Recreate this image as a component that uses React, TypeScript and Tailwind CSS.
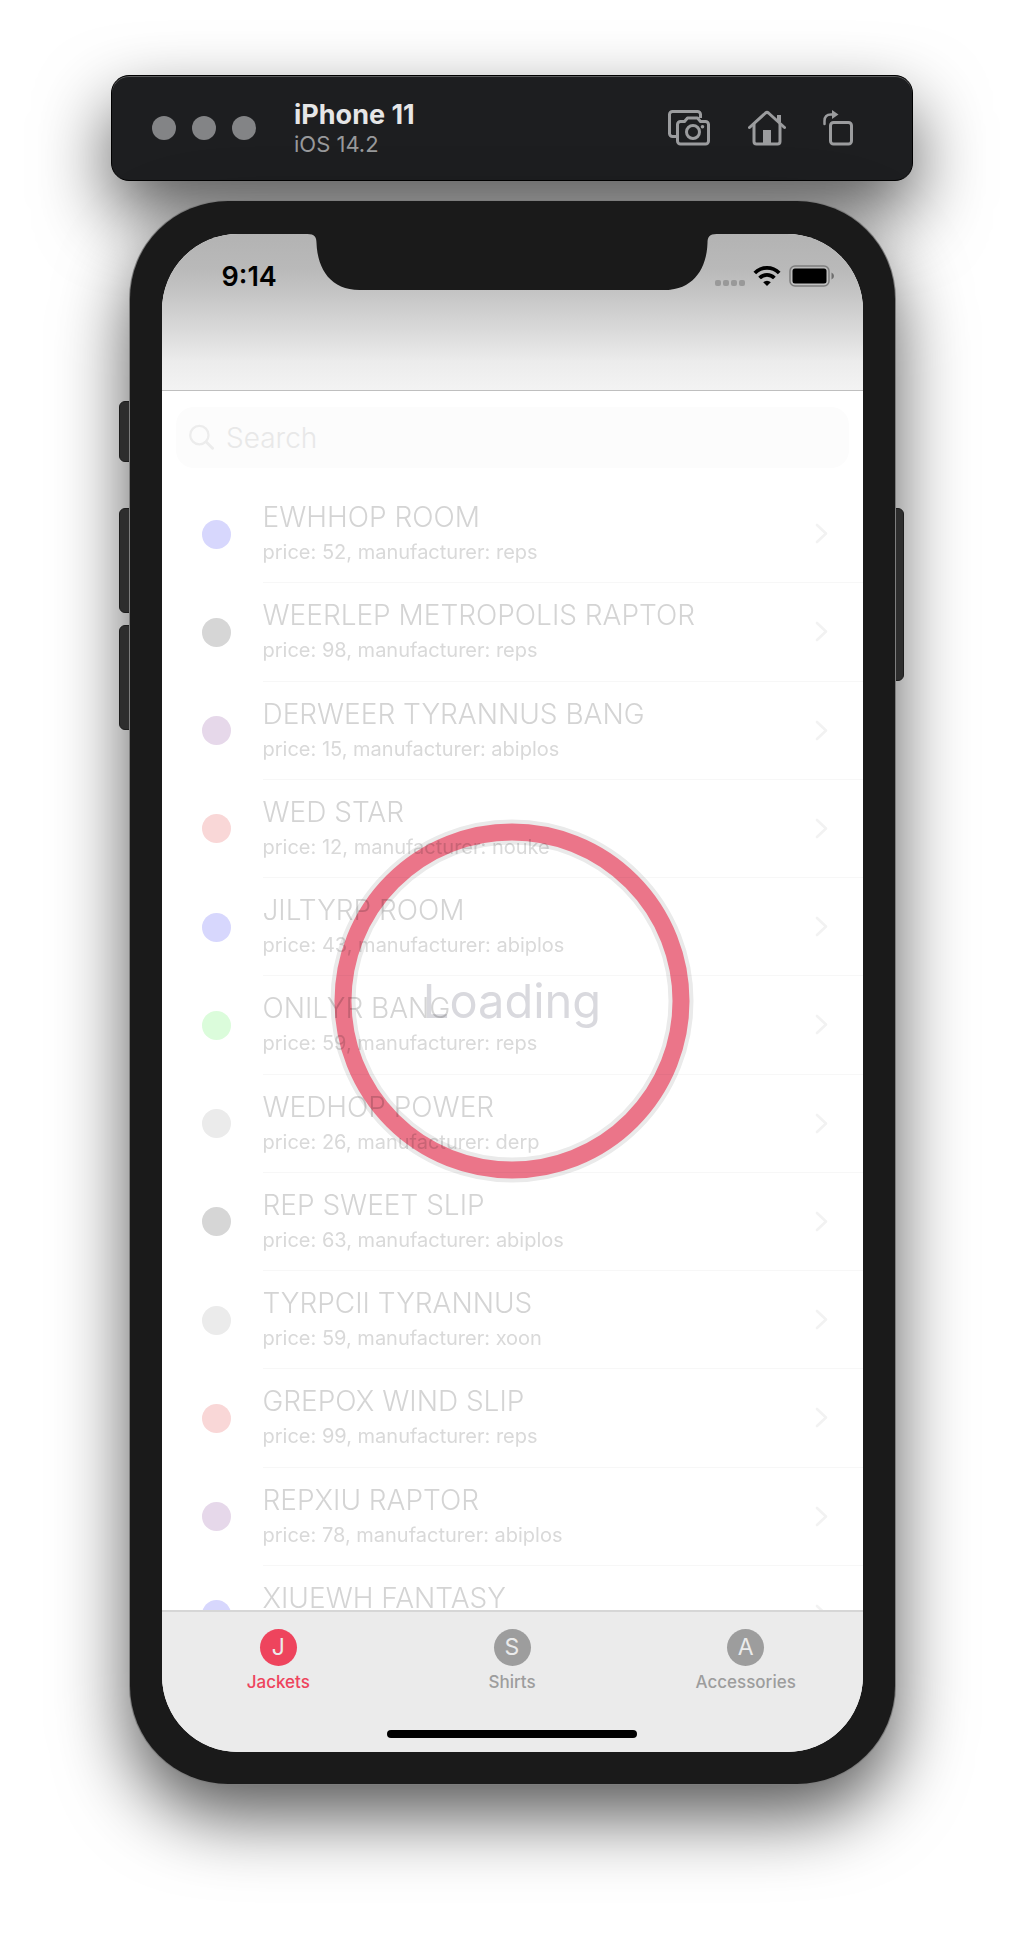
import React from "react";

type Item = { name: string; price?: number; maker?: string; dot: string };

const BLUE = "bg-[#d7d7fd]";
const DARK = "bg-[#d6d6d6]";
const PURPLE = "bg-[#e6d8ea]";
const RED = "bg-[#f9d7d7]";
const GREEN = "bg-[#dbfcdb]";
const GRAY = "bg-[#ebebeb]";

const items: Item[] = [
  { name: "EWHHOP ROOM", price: 52, maker: "reps", dot: BLUE },
  { name: "WEERLEP METROPOLIS RAPTOR", price: 98, maker: "reps", dot: DARK },
  { name: "DERWEER TYRANNUS BANG", price: 15, maker: "abiplos", dot: PURPLE },
  { name: "WED STAR", price: 12, maker: "nouke", dot: RED },
  { name: "JILTYRP ROOM", price: 43, maker: "abiplos", dot: BLUE },
  { name: "ONILYR BANG", price: 59, maker: "reps", dot: GREEN },
  { name: "WEDHOP POWER", price: 26, maker: "derp", dot: GRAY },
  { name: "REP SWEET SLIP", price: 63, maker: "abiplos", dot: DARK },
  { name: "TYRPCII TYRANNUS", price: 59, maker: "xoon", dot: GRAY },
  { name: "GREPOX WIND SLIP", price: 99, maker: "reps", dot: RED },
  { name: "REPXIU RAPTOR", price: 78, maker: "abiplos", dot: PURPLE },
  { name: "XIUEWH FANTASY", dot: BLUE },
];

function CameraIcon() {
  return (
    <svg width="42" height="36" viewBox="0 0 42 36" fill="none" stroke="#9b9c9e" strokeWidth="3" strokeLinejoin="round">
      <path d="M8 26.5H4.5A3 3 0 0 1 1.5 23.5V4.5A3 3 0 0 1 4.5 1.5H29.5A3 3 0 0 1 32.5 4.5V8" />
      <path d="M9.5 14.5A3 3 0 0 1 12.5 11.5H16.5L19.5 8H29.5L32.5 11.5H37.5A3 3 0 0 1 40.5 14.5V31A3 3 0 0 1 37.5 34H12.5A3 3 0 0 1 9.5 31Z" />
      <circle cx="25" cy="22" r="6.5" />
      <circle cx="34.5" cy="16.7" r="1.8" fill="#9b9c9e" stroke="none" />
    </svg>
  );
}

function HomeIcon() {
  return (
    <svg width="38" height="36" viewBox="0 0 38 36" fill="none" stroke="#9b9c9e" strokeWidth="3" strokeLinecap="round" strokeLinejoin="round">
      <path d="M1.5 17.5L17.5 3Q19 1.8 20.5 3L36.5 17.5" />
      <path d="M6 14V31.5A2.5 2.5 0 0 0 8.5 34H29.5A2.5 2.5 0 0 0 32 31.5V14" />
      <path d="M31 5V12" strokeWidth="4" strokeLinecap="butt" />
      <path d="M15 20H23V34H15Z" fill="#9b9c9e" stroke="none" />
    </svg>
  );
}

function RotateIcon() {
  return (
    <svg width="30" height="36" viewBox="0 0 30 36" fill="none" stroke="#9b9c9e" strokeWidth="3">
      <rect x="7.5" y="12.5" width="21" height="21.5" rx="3" />
      <path d="M1.5 14V11Q1.5 4.5 8 4.5H10" strokeLinecap="round" strokeWidth="2.5" />
      <path d="M9 0L15.5 4.5L9 9Z" fill="#9b9c9e" stroke="none" />
    </svg>
  );
}

function WifiIcon() {
  return (
    <svg width="28" height="22" viewBox="0 0 28 22" fill="none" stroke="#000" strokeWidth="3.8">
      <path d="M1.8 8A17.3 17.3 0 0 1 26.2 8" />
      <path d="M6.6 13A10.5 10.5 0 0 1 21.4 13" />
      <path d="M14 21L10.2 17.2A5.4 5.4 0 0 1 17.8 17.2Z" fill="#000" stroke="none" />
    </svg>
  );
}

function BatteryIcon() {
  return (
    <svg width="46" height="22" viewBox="0 0 46 22" fill="none">
      <rect x="1" y="1" width="39" height="20" rx="5" stroke="#7d7d7d" strokeWidth="1.5" />
      <rect x="3.5" y="3.5" width="34" height="15" rx="2.5" fill="#000" />
      <path d="M42.5 7.5Q45 8.5 45 11Q45 13.5 42.5 14.5Z" fill="#6e6e6e" />
    </svg>
  );
}

function Toolbar() {
  return (
    <header className="flex h-[106px] w-full max-w-[802px] items-center rounded-[18px] border border-black bg-[#1d1e20] pl-10 pr-[59px] shadow-[0_32px_72px_rgba(0,0,0,0.66),inset_0_1px_0_#5b5c5d]">
      <div className="flex gap-4">
        <button aria-label="Close" className="size-6 rounded-full bg-[#838486]" />
        <button aria-label="Minimize" className="size-6 rounded-full bg-[#838486]" />
        <button aria-label="Zoom" className="size-6 rounded-full bg-[#838486]" />
      </div>
      <div className="ml-[38px] flex-1 pt-[2px]">
        <h1 className="text-[27px] font-bold leading-[30px] text-[#e6e6e7]">iPhone 11</h1>
        <p className="text-[22px] leading-7 text-[#98999b]">iOS 14.2</p>
      </div>
      <div className="flex items-center">
        <button aria-label="Take screenshot"><CameraIcon /></button>
        <button aria-label="Home" className="ml-[38px]"><HomeIcon /></button>
        <button aria-label="Rotate" className="ml-[37px]"><RotateIcon /></button>
      </div>
    </header>
  );
}

function StatusBar() {
  return (
    <div className="relative flex h-[157px] justify-between border-b border-[#bfbfbf] bg-[linear-gradient(#b3b3b3,#b9b9b9_22%,#c5c5c5_38%,#dadada_62%,#ececec_82%,#f3f3f3)] pl-[60px] pr-7 pt-6">
      <svg className="absolute left-1/2 top-0 -translate-x-1/2" width="409" height="56" viewBox="0 0 409 56">
        <path d="M0 0C7 0 9 3 9 9C10 36 24 56 52 56H357C385 56 399 36 400 9C400 3 402 0 409 0Z" fill="#1a1a1a" />
      </svg>
      <time className="text-[27px] font-semibold leading-[38px] text-black">9:14</time>
      <div className="mt-[7px] flex h-[22px] items-end">
        <div className="mb-px mr-2 flex gap-[2px]">
          <span className="size-[6px] rounded-[2px] bg-[#999]" />
          <span className="size-[6px] rounded-[2px] bg-[#999]" />
          <span className="size-[6px] rounded-[2px] bg-[#999]" />
          <span className="size-[6px] rounded-[2px] bg-[#999]" />
        </div>
        <WifiIcon />
        <span className="ml-2"><BatteryIcon /></span>
      </div>
    </div>
  );
}

function SearchBox() {
  return (
    <label className="mx-[14px] mt-4 flex h-[61px] items-center gap-3 rounded-[18px] bg-[#fcfcfc] pl-[13px]">
      <svg width="27" height="27" viewBox="0 0 27 27" fill="none" stroke="#ececec" strokeWidth="2.4" strokeLinecap="round">
        <circle cx="11" cy="11" r="9.7" />
        <path d="M18 18L25 25" strokeWidth="3" />
      </svg>
      <input type="search" aria-label="Search" placeholder="Search" className="w-full bg-transparent text-[28px] font-light outline-none placeholder:text-[#e8e8e8]" />
    </label>
  );
}

function Row({ item }: { item: Item }) {
  return (
    <li className="flex">
      <button className="flex w-full items-stretch pl-10 text-left">
        <span className={"size-[29px] shrink-0 self-center rounded-full " + item.dot} />
        <span className="ml-8 flex flex-1 items-center border-b border-[#f7f7f7] pr-[35px]">
          <span className="flex-1 self-start whitespace-nowrap pt-[14px] text-[#d9d9d9]">
            <span className="block text-[28px] font-light leading-9 text-[#d4d4d4]">{item.name}</span>
            {item.maker && (
              <span className="block text-[20px] leading-[34px]">price: {item.price}, manufacturer: {item.maker}</span>
            )}
          </span>
          <svg width="13" height="21" viewBox="0 0 13 21" fill="none" stroke="#f2f2f2" strokeWidth="2.6" strokeLinecap="round" strokeLinejoin="round">
            <path d="M2 2L11 10.5L2 19" />
          </svg>
        </span>
      </button>
    </li>
  );
}

function LoadingRing() {
  return (
    <div role="status" className="pointer-events-none absolute inset-0 flex items-center justify-center mix-blend-multiply">
      <svg width="364" height="364" viewBox="0 0 364 364" fill="none">
        <circle cx="182" cy="182" r="169" stroke="#eaeaea" strokeWidth="25" />
        <circle cx="182" cy="182" r="169" stroke="#eb7589" strokeWidth="17" />
      </svg>
      <span className="absolute text-[47px] leading-none text-[#d9d9de]">Loading</span>
    </div>
  );
}

function Tab({ letter, label, active = false }: { letter: string; label: string; active?: boolean }) {
  return (
    <button className={"flex flex-1 flex-col items-center " + (active ? "text-[#ee445d]" : "text-[#9d9d9d]")}>
      <span className={"flex size-[37px] items-center justify-center rounded-full text-[23px] text-[#ebebeb] " + (active ? "bg-[#ee445d]" : "bg-[#9d9d9d]")}>
        {letter}
      </span>
      <span className="mt-1 text-[17px] font-medium leading-6">{label}</span>
    </button>
  );
}

export default function App() {
  return (
    <div className="flex min-h-screen flex-col items-center bg-white px-8 py-[75px] font-['Inter','Liberation_Sans',sans-serif]">
      <Toolbar />
      <div className="relative mt-5 w-full max-w-[765px] rounded-[98px] shadow-[0_32px_72px_rgba(0,0,0,0.66)]">
        <span className="absolute -left-[11px] top-[200px] h-[61px] w-5 rounded-md border border-[#1c1c1c] bg-[#2d2d2d]" />
        <span className="absolute -left-[11px] top-[307px] h-[105px] w-5 rounded-md border border-[#1c1c1c] bg-[#2d2d2d]" />
        <span className="absolute -left-[11px] top-[424px] h-[105px] w-5 rounded-md border border-[#1c1c1c] bg-[#2d2d2d]" />
        <span className="absolute -right-[9px] top-[307px] h-[173px] w-5 rounded-md border border-[#1c1c1c] bg-[#2d2d2d]" />
        <div className="relative rounded-[98px] bg-[#1a1a1a] px-8 pb-8 pt-[33px] shadow-[0_0_0_1px_#7d7d7d]">
          <div className="isolate flex flex-col overflow-hidden rounded-[76px] bg-white">
            <StatusBar />
            <main className="relative h-[1219px] overflow-hidden">
              <SearchBox />
              <ul className="mt-[17px] grid h-[1179px] auto-rows-fr">
                {items.map((item) => (
                  <Row key={item.name} item={item} />
                ))}
              </ul>
              <LoadingRing />
            </main>
            <nav className="border-t-2 border-[#d6d6d6] bg-[#ebebeb] pb-[14px] pt-[17px]">
              <div className="flex">
                <Tab letter="J" label="Jackets" active />
                <Tab letter="S" label="Shirts" />
                <Tab letter="A" label="Accessories" />
              </div>
              <div className="mx-auto mt-9 h-2 w-[250px] rounded-full bg-black" />
            </nav>
          </div>
        </div>
      </div>
    </div>
  );
}
